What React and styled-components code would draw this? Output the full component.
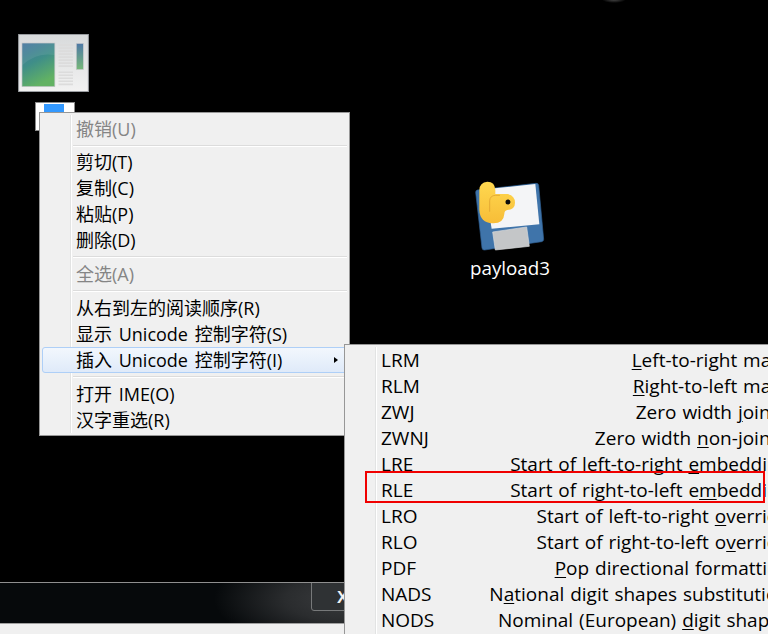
import React from "react";
import styled, { createGlobalStyle } from "styled-components";

const Global = createGlobalStyle`
  html, body { margin: 0; padding: 0; background: #000; }
  #root { width: 768px; height: 634px; }
`;

const FONT = `"Open Sans", "Noto Sans CJK SC", sans-serif`;

const Desktop = styled.div`
  position: relative;
  width: 768px;
  height: 634px;
  overflow: hidden;
  background: #000;
  font-family: ${FONT};
`;

const TopGlow = styled.div`
  position: absolute;
  left: 602px;
  top: -4px;
  width: 24px;
  height: 7px;
  background: radial-gradient(ellipse at center, #4a4a4a 0%, rgba(0, 0, 0, 0) 70%);
`;

const Thumb = styled.svg`
  position: absolute;
  left: 18px;
  top: 34px;
  width: 71px;
  height: 58px;
`;

const RenameBox = styled.div`
  position: absolute;
  left: 35px;
  top: 102px;
  width: 38px;
  height: 26px;
  background: #fff;
  border: 1px solid #8a8a8a;
  display: flex;
  justify-content: center;
  padding-top: 1px;
`;

const RenameSelection = styled.div`
  width: 20px;
  height: 8px;
  background: #3399ff;
  margin-right: 2px;
`;

const FileIcon = styled.div`
  position: absolute;
  left: 450px;
  top: 170px;
  width: 120px;
  display: flex;
  flex-direction: column;
  align-items: center;
`;

const FileGlyph = styled.svg`
  width: 120px;
  height: 86px;
`;

const FileLabel = styled.div`
  color: #fff;
  font-size: 18.8px;
  line-height: 22px;
  margin-top: 1px;
`;

const Menu = styled.div`
  position: absolute;
  left: 39px;
  top: 112px;
  width: 311px;
  height: 324px;
  box-sizing: border-box;
  border: 1px solid #979797;
  background: #f0f0f0;
  padding: 3px 2px 2px;
  display: flex;
  flex-direction: column;
`;

const Gutter = styled.div`
  position: absolute;
  left: ${p => p.$left}px;
  top: 2px;
  bottom: 2px;
  width: 2px;
  background: linear-gradient(to right, #e2e3e3 50%, #ffffff 50%);
`;

const Item = styled.div`
  position: relative;
  height: 26px;
  flex: none;
  box-sizing: border-box;
  display: flex;
  align-items: center;
  padding-left: 34px;
  font-size: 18px;
  line-height: 26px;
  white-space: pre;
  word-spacing: 2px;
  color: ${p => (p.$disabled ? "#858585" : "#000")};
`;

const HotItem = styled(Item)`
  border: 1px solid #aecff7;
  border-radius: 3px;
  padding-left: 33px;
  background: linear-gradient(to bottom, #f2f7fd, #dfeaf9);
`;

const Arrow = styled.span`
  position: absolute;
  right: 8px;
  top: 9px;
  width: 0;
  height: 0;
  border-left: 4px solid #000;
  border-top: 3.5px solid transparent;
  border-bottom: 3.5px solid transparent;
`;

const Separator = styled.div`
  flex: none;
  height: ${p => p.$h || 8}px;
  margin-left: 31px;
  display: flex;
  align-items: center;
  &::before {
    content: "";
    display: block;
    width: 100%;
    height: 2px;
    background: linear-gradient(to bottom, #dcdcdc 50%, #ffffff 50%);
  }
`;

const SubMenu = styled.div`
  position: absolute;
  left: 344px;
  top: 344px;
  width: 462px;
  height: 320px;
  box-sizing: border-box;
  border: 1px solid #979797;
  background: #f0f0f0;
  padding: 2px;
  display: flex;
  flex-direction: column;
`;

const SubRow = styled(Item)`
  padding: 0 14px 0 34px;
  justify-content: space-between;
  font-size: 19px;
  word-spacing: 1px;
  u { text-underline-offset: 2px; text-decoration-thickness: 1px; }
`;

const Highlight = styled.div`
  position: absolute;
  left: 365px;
  top: 471px;
  width: 400px;
  height: 32px;
  box-sizing: border-box;
  border: 2px solid #f00000;
`;

const Strip = styled.div`
  position: absolute;
  left: 0;
  top: 582px;
  width: 344px;
  height: 52px;
  background: #f0f0f0;
`;

const StripBar = styled.div`
  position: relative;
  height: 40px;
  overflow: hidden;
  border-top: 1px solid #8f8f8f;
  border-bottom: 1px solid #a0a0a0;
  background:
    radial-gradient(ellipse 130px 50px at 100% 40%, #3a3c3e 0%, #2a2c2e 45%, rgba(6, 9, 11, 0) 100%),
    #06090b;
`;

const CloseButton = styled.div`
  position: absolute;
  left: 311px;
  top: -1px;
  width: 60px;
  height: 29px;
  box-sizing: border-box;
  border: 1px solid #77797a;
  border-radius: 0 0 0 3px;
  background: #2f3234;
  color: #f2f2f2;
  font: bold 17px/29px "Liberation Sans", sans-serif;
  padding-left: 25px;
`;

const rows = [
  ["LRM", <><u>L</u>eft-to-right mark</>],
  ["RLM", <><u>R</u>ight-to-left mark</>],
  ["ZWJ", <>Zero width <u>j</u>oiner</>],
  ["ZWNJ", <>Zero width <u>n</u>on-joiner</>],
  ["LRE", <>Start of left-to-right <u>e</u>mbedding</>],
  ["RLE", <>Start of right-to-left e<u>m</u>bedding</>],
  ["LRO", <>Start of left-to-right <u>o</u>verride</>],
  ["RLO", <>Start of right-to-left o<u>v</u>erride</>],
  ["PDF", <><u>P</u>op directional formatting</>],
  ["NADS", <>N<u>a</u>tional digit shapes substitution</>],
  ["NODS", <>Nominal (European) <u>d</u>igit shapes</>],
  ["ASS", <>Activate <u>s</u>ymmetric swapping</>],
];

export default function App() {
  return (
    <Desktop>
      <Global />
      <TopGlow />
      <Thumb viewBox="55 42 210 173">
        <defs>
          <linearGradient id="frame" x1="0" y1="0" x2="0" y2="1">
            <stop offset="0" stopColor="#d8dadb" />
            <stop offset="1" stopColor="#f2f2f2" />
          </linearGradient>
          <linearGradient id="pic" x1="0" y1="0" x2="0.4" y2="1">
            <stop offset="0" stopColor="#44749f" />
            <stop offset="0.5" stopColor="#3f8e88" />
            <stop offset="1" stopColor="#62b263" />
          </linearGradient>
          <linearGradient id="side" x1="0" y1="0" x2="0" y2="1">
            <stop offset="0" stopColor="#4e78a6" />
            <stop offset="1" stopColor="#76b878" />
          </linearGradient>
        </defs>
        <rect x="56" y="43" width="208" height="171" fill="url(#frame)" stroke="#9a9ea2" strokeWidth="3" />
        <rect x="66" y="69" width="98" height="130" fill="url(#pic)" stroke="#c4c6c8" strokeWidth="2" />
        <path d="M67 135 Q110 95 163 105 L163 71 L67 71 Z" fill="#ffffff" opacity="0.08" />
        <path d="M175 75H218M175 84H218M175 93H218M175 102H218M175 111H218M175 120H218M175 129H218M175 138H218M175 156H218M175 165H218M175 174H218M175 183H218M175 192H218" stroke="#dcdcdc" strokeWidth="5" />
        <rect x="228" y="70" width="21" height="78" fill="url(#side)" stroke="#c8cacc" strokeWidth="2" />
      </Thumb>

      <RenameBox><RenameSelection /></RenameBox>

      <FileIcon>
        <FileGlyph viewBox="0 0 120 86">
          <g transform="scale(0.3333)">
            <path d="M82 60 L258 40 Q265 39 266 46 L281 208 Q281 214 275 215 L104 240 Q97 241 96 234 L77 67 Q77 61 82 60 Z" fill="#3f74aa" stroke="#2f5f92" strokeWidth="2" />
            <path d="M105 58 L256 42 L268 163 L125 176 Z" fill="#f4f5f7" />
            <path d="M128 186 L230 171 L238 229 L136 240 Z" fill="#c4c6c8" stroke="#dadbdc" strokeWidth="2" />
            <defs>
              <linearGradient id="py" x1="0" y1="0" x2="0" y2="1">
                <stop offset="0" stopColor="#ffd84f" />
                <stop offset="1" stopColor="#f7bd38" />
              </linearGradient>
            </defs>
            <path d="M88 60 Q89 37 112 35 Q135 35 136 60 L136 72 L172 72 Q195 76 195 98 Q195 118 172 120 Q163 121 163 132 Q161 161 128 160 Q90 158 88 120 Z" fill="url(#py)" />
            <path d="M119 125 L119 92 Q120 77 136 76 L150 76" fill="none" stroke="#d99a2e" strokeWidth="2" />
            <circle cx="174" cy="96" r="7.5" fill="#0c0c0c" />
          </g>
        </FileGlyph>
        <FileLabel>payload3</FileLabel>
      </FileIcon>

      <Strip>
        <StripBar>
          <CloseButton>X</CloseButton>
        </StripBar>
      </Strip>

      <Menu>
        <Gutter $left={30} />
        <Item $disabled>撤销(U)</Item>
        <Separator $h={7} />
        <Item>剪切(T)</Item>
        <Item>复制(C)</Item>
        <Item>粘贴(P)</Item>
        <Item>删除(D)</Item>
        <Separator />
        <Item $disabled>全选(A)</Item>
        <Separator />
        <Item>从右到左的阅读顺序(R)</Item>
        <Item>显示 Unicode 控制字符(S)</Item>
        <HotItem>插入 Unicode 控制字符(I)<Arrow /></HotItem>
        <Separator />
        <Item>打开 IME(O)</Item>
        <Item>汉字重选(R)</Item>
      </Menu>

      <SubMenu>
        <Gutter $left={30} />
        {rows.map(([code, label]) => (
          <SubRow key={code}>
            <span>{code}</span>
            <span>{label}</span>
          </SubRow>
        ))}
      </SubMenu>

      <Highlight />
    </Desktop>
  );
}
